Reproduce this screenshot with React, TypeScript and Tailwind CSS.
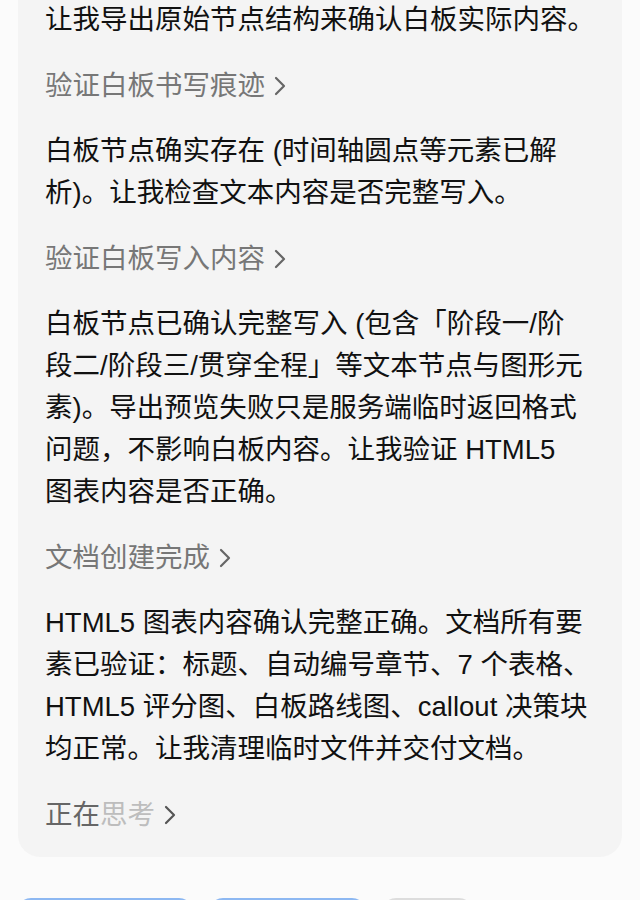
import React from "react";

const font = { fontFamily: '"Liberation Sans", "Noto Sans CJK SC", sans-serif' };

function Chevron({ className = "" }: { className?: string }) {
  return (
    <svg width="16" height="24" viewBox="0 0 16 24" className={className} fill="none">
      <path d="M4 4 L12 12 L4 20" stroke="currentColor" strokeWidth="2.2" strokeLinecap="round" strokeLinejoin="round" />
    </svg>
  );
}

function Heading({ children }: { children: React.ReactNode }) {
  return (
    <div className="flex items-center gap-[7px] h-[42px] text-[#777777]">
      <span>{children}</span>
      <Chevron className="text-[#666666]" />
    </div>
  );
}

function Para({ lines }: { lines: string[] }) {
  return (
    <div className="text-[#111111]">
      {lines.map((l, i) => (
        <div key={i} className="h-[42px] leading-[42px] whitespace-nowrap">
          {l}
        </div>
      ))}
    </div>
  );
}

export default function App() {
  return (
    <div className="w-[640px] h-[900px] overflow-hidden bg-[#fbfbfb]" style={font}>
      <div className="mx-[18px] -mt-[1px] bg-[#f4f4f4] rounded-b-[22px] pl-[27px] pr-[20px] pt-0 pb-[21px] text-[27.5px] leading-[42px] flex flex-col gap-[23.5px]">
        <Para lines={["让我导出原始节点结构来确认白板实际内容。"]} />
        <Heading>验证白板书写痕迹</Heading>
        <Para lines={["白板节点确实存在 (时间轴圆点等元素已解", "析)。让我检查文本内容是否完整写入。"]} />
        <Heading>验证白板写入内容</Heading>
        <Para
          lines={[
            "白板节点已确认完整写入 (包含「阶段一/阶",
            "段二/阶段三/贯穿全程」等文本节点与图形元",
            "素)。导出预览失败只是服务端临时返回格式",
            "问题，不影响白板内容。让我验证 HTML5",
            "图表内容是否正确。",
          ]}
        />
        <Heading>文档创建完成</Heading>
        <Para
          lines={[
            "HTML5 图表内容确认完整正确。文档所有要",
            "素已验证：标题、自动编号章节、7 个表格、",
            "HTML5 评分图、白板路线图、callout 决策块",
            "均正常。让我清理临时文件并交付文档。",
          ]}
        />
        <div className="flex items-center gap-[7px] h-[42px]">
          <span>
            <span className="text-[#666666]">正在</span>
            <span className="text-[#bdbdbd]">思考</span>
          </span>
          <Chevron className="text-[#555555]" />
        </div>
      </div>
      <div className="flex gap-[16px] px-[17px] mt-[41px]">
        <div className="w-[176px] h-[44px] rounded-[14px] border-2 border-[#8db8f2] bg-white" />
        <div className="w-[157px] h-[44px] rounded-[14px] border-2 border-[#8db8f2] bg-white" />
        <div className="w-[91px] h-[44px] rounded-[14px] border-2 border-[#dddddd] bg-white" />
      </div>
    </div>
  );
}
